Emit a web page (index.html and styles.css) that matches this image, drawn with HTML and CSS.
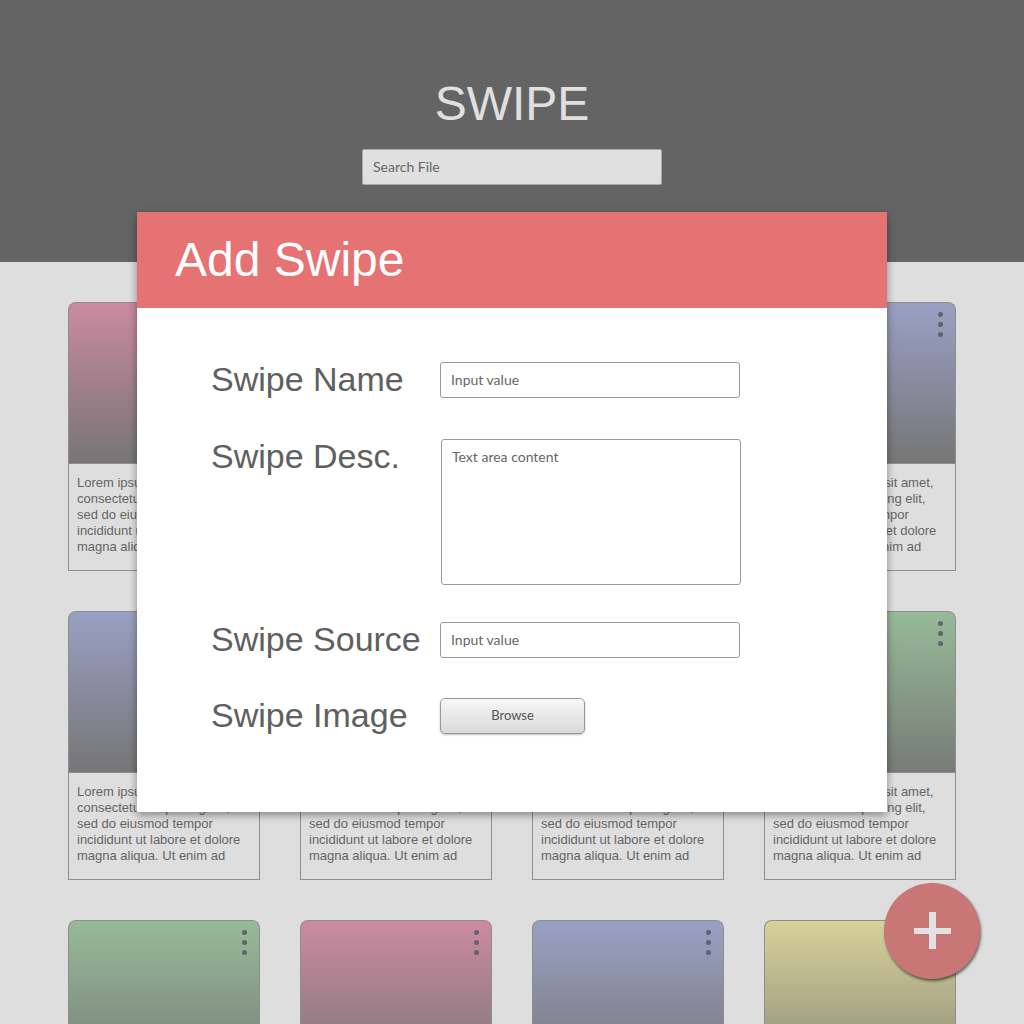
FILE: index.html
```html
<!DOCTYPE html>
<html lang="en">
<head>
<meta charset="utf-8">
<title>Swipe</title>
<link rel="stylesheet" href="styles.css">
</head>
<body>
<div class="page">
  <header class="topbar">
    <h1 class="brand">SWIPE</h1>
    <div class="search">Search File</div>
  </header>

  <main class="grid">
    <div class="card"><div class="thumb pink"><span class="dots"><i></i><i></i><i></i></span></div><p class="desc">Lorem ipsum dolor sit amet, consectetur adipiscing elit, sed do eiusmod tempor incididunt ut labore et dolore magna aliqua. Ut enim ad</p></div>
    <div class="card"><div class="thumb green"><span class="dots"><i></i><i></i><i></i></span></div><p class="desc">Lorem ipsum dolor sit amet, consectetur adipiscing elit, sed do eiusmod tempor incididunt ut labore et dolore magna aliqua. Ut enim ad</p></div>
    <div class="card"><div class="thumb yellow"><span class="dots"><i></i><i></i><i></i></span></div><p class="desc">Lorem ipsum dolor sit amet, consectetur adipiscing elit, sed do eiusmod tempor incididunt ut labore et dolore magna aliqua. Ut enim ad</p></div>
    <div class="card"><div class="thumb blue"><span class="dots"><i></i><i></i><i></i></span></div><p class="desc">Lorem ipsum dolor sit amet, consectetur adipiscing elit, sed do eiusmod tempor incididunt ut labore et dolore magna aliqua. Ut enim ad</p></div>

    <div class="card"><div class="thumb blue"><span class="dots"><i></i><i></i><i></i></span></div><p class="desc">Lorem ipsum dolor sit amet, consectetur adipiscing elit, sed do eiusmod tempor incididunt ut labore et dolore magna aliqua. Ut enim ad</p></div>
    <div class="card"><div class="thumb pink"><span class="dots"><i></i><i></i><i></i></span></div><p class="desc">Lorem ipsum dolor sit amet, consectetur adipiscing elit, sed do eiusmod tempor incididunt ut labore et dolore magna aliqua. Ut enim ad</p></div>
    <div class="card"><div class="thumb yellow"><span class="dots"><i></i><i></i><i></i></span></div><p class="desc">Lorem ipsum dolor sit amet, consectetur adipiscing elit, sed do eiusmod tempor incididunt ut labore et dolore magna aliqua. Ut enim ad</p></div>
    <div class="card"><div class="thumb green"><span class="dots"><i></i><i></i><i></i></span></div><p class="desc">Lorem ipsum dolor sit amet, consectetur adipiscing elit, sed do eiusmod tempor incididunt ut labore et dolore magna aliqua. Ut enim ad</p></div>

    <div class="card"><div class="thumb green"><span class="dots"><i></i><i></i><i></i></span></div></div>
    <div class="card"><div class="thumb pink"><span class="dots"><i></i><i></i><i></i></span></div></div>
    <div class="card"><div class="thumb blue"><span class="dots"><i></i><i></i><i></i></span></div></div>
    <div class="card"><div class="thumb yellow"><span class="dots"><i></i><i></i><i></i></span></div></div>
  </main>

  <section class="modal">
    <div class="modal-head">Add Swipe</div>
    <div class="modal-body">
      <div class="row">
        <label class="lbl">Swipe Name</label>
        <div class="field">Input value</div>
      </div>
      <div class="row row-desc">
        <label class="lbl">Swipe Desc.</label>
        <div class="field area">Text area content</div>
      </div>
      <div class="row row-source">
        <label class="lbl">Swipe Source</label>
        <div class="field">Input value</div>
      </div>
      <div class="row row-image">
        <label class="lbl">Swipe Image</label>
        <div class="browse">Browse</div>
      </div>
    </div>
  </section>

  <div class="fab"><span class="plus-h"></span><span class="plus-v"></span></div>
</div>
</body>
</html>
```
FILE: styles.css
```css
* { box-sizing: border-box; }
html, body { margin: 0; padding: 0; }
body {
  width: 1024px;
  height: 1024px;
  overflow: hidden;
  background: #dedede;
  font-family: "Liberation Sans", Arial, sans-serif;
}
.page {
  position: relative;
  width: 1024px;
  height: 1024px;
  overflow: hidden;
}
.topbar {
  height: 262px;
  background: #646464;
  display: flex;
  flex-direction: column;
  align-items: center;
  padding-top: 76px;
}
.brand {
  margin: 0;
  font-weight: normal;
  font-size: 48px;
  line-height: 56px;
  color: #e0e0e0;
  letter-spacing: 0;
}
.search {
  margin-top: 17px;
  width: 300px;
  height: 36px;
  background: #e0e0e0;
  border: 1px solid #a8a8a8;
  border-radius: 2px;
  font-family: Lato, "Open Sans", sans-serif;
  font-size: 14px;
  line-height: 33px;
  color: #666;
  padding-left: 10px;
}
.grid {
  display: grid;
  grid-template-columns: repeat(4, 192px);
  grid-auto-rows: 269px;
  column-gap: 40px;
  row-gap: 40px;
  padding: 40px 68px 0;
}
.card {
  display: flex;
  flex-direction: column;
}
.thumb {
  position: relative;
  height: 161px;
  border: 1px solid #8e8e8e;
  border-bottom: none;
  border-radius: 8px 8px 0 0;
}
.pink { background: linear-gradient(to bottom, #cc8aa0, #767676); }
.blue { background: linear-gradient(to bottom, #9aa0c4, #767676); }
.green { background: linear-gradient(to bottom, #97ba98, #777c77); }
.yellow { background: linear-gradient(to bottom, #d6d29a, #8a8878); }
.dots {
  position: absolute;
  top: 9px;
  right: 12px;
  display: flex;
  flex-direction: column;
  gap: 5px;
}
.dots i {
  display: block;
  width: 5px;
  height: 5px;
  border-radius: 50%;
  background: #626270;
}
.desc {
  margin: 0;
  flex: 1;
  border: 1px solid #8e8e8e;
  padding: 11px 8px 0;
  font-size: 13px;
  line-height: 16px;
  color: #656565;
}
.modal {
  position: absolute;
  left: 137px;
  top: 212px;
  width: 750px;
  height: 600px;
  background: #fff;
  box-shadow: 0 3px 8px rgba(0,0,0,0.4);
}
.modal-head {
  height: 96px;
  background: #e57373;
  color: #fff;
  font-size: 48px;
  line-height: 96px;
  padding-left: 38px;
}
.modal-body {
  padding: 54px 0 0 74px;
  display: flex;
  flex-direction: column;
}
.row {
  display: flex;
  align-items: flex-start;
}
.row-desc { margin-top: 41px; }
.row-source { margin-top: 37px; }
.row-image { margin-top: 40px; }
.lbl {
  width: 229px;
  font-size: 34px;
  line-height: 34px;
  color: #606060;
}
.field {
  width: 300px;
  height: 36px;
  border: 1px solid #999;
  border-radius: 3px;
  font-family: Lato, "Open Sans", sans-serif;
  font-size: 14px;
  line-height: 33px;
  color: #666;
  padding-left: 10px;
}
.field.area {
  height: 146px;
  margin-left: 1px;
  line-height: 20px;
  padding-top: 7px;
}
.browse {
  width: 145px;
  height: 36px;
  border: 1px solid #999;
  border-radius: 5px;
  background: linear-gradient(to bottom, #f7f7f7, #d9d9d9);
  box-shadow: 0 1px 2px rgba(0,0,0,0.25);
  font-family: Lato, "Open Sans", sans-serif;
  font-size: 13px;
  line-height: 33px;
  text-align: center;
  color: #555;
}
.fab {
  position: absolute;
  left: 884px;
  top: 883px;
  width: 96px;
  height: 96px;
  border-radius: 50%;
  background: #c97676;
  box-shadow: 1px 2px 3px rgba(0,0,0,0.55);
}
.plus-h {
  position: absolute;
  left: 30px;
  top: 45px;
  width: 37px;
  height: 6px;
  background: #e2e2e2;
}
.plus-v {
  position: absolute;
  left: 45px;
  top: 29px;
  width: 7px;
  height: 37px;
  background: #e2e2e2;
}
```
